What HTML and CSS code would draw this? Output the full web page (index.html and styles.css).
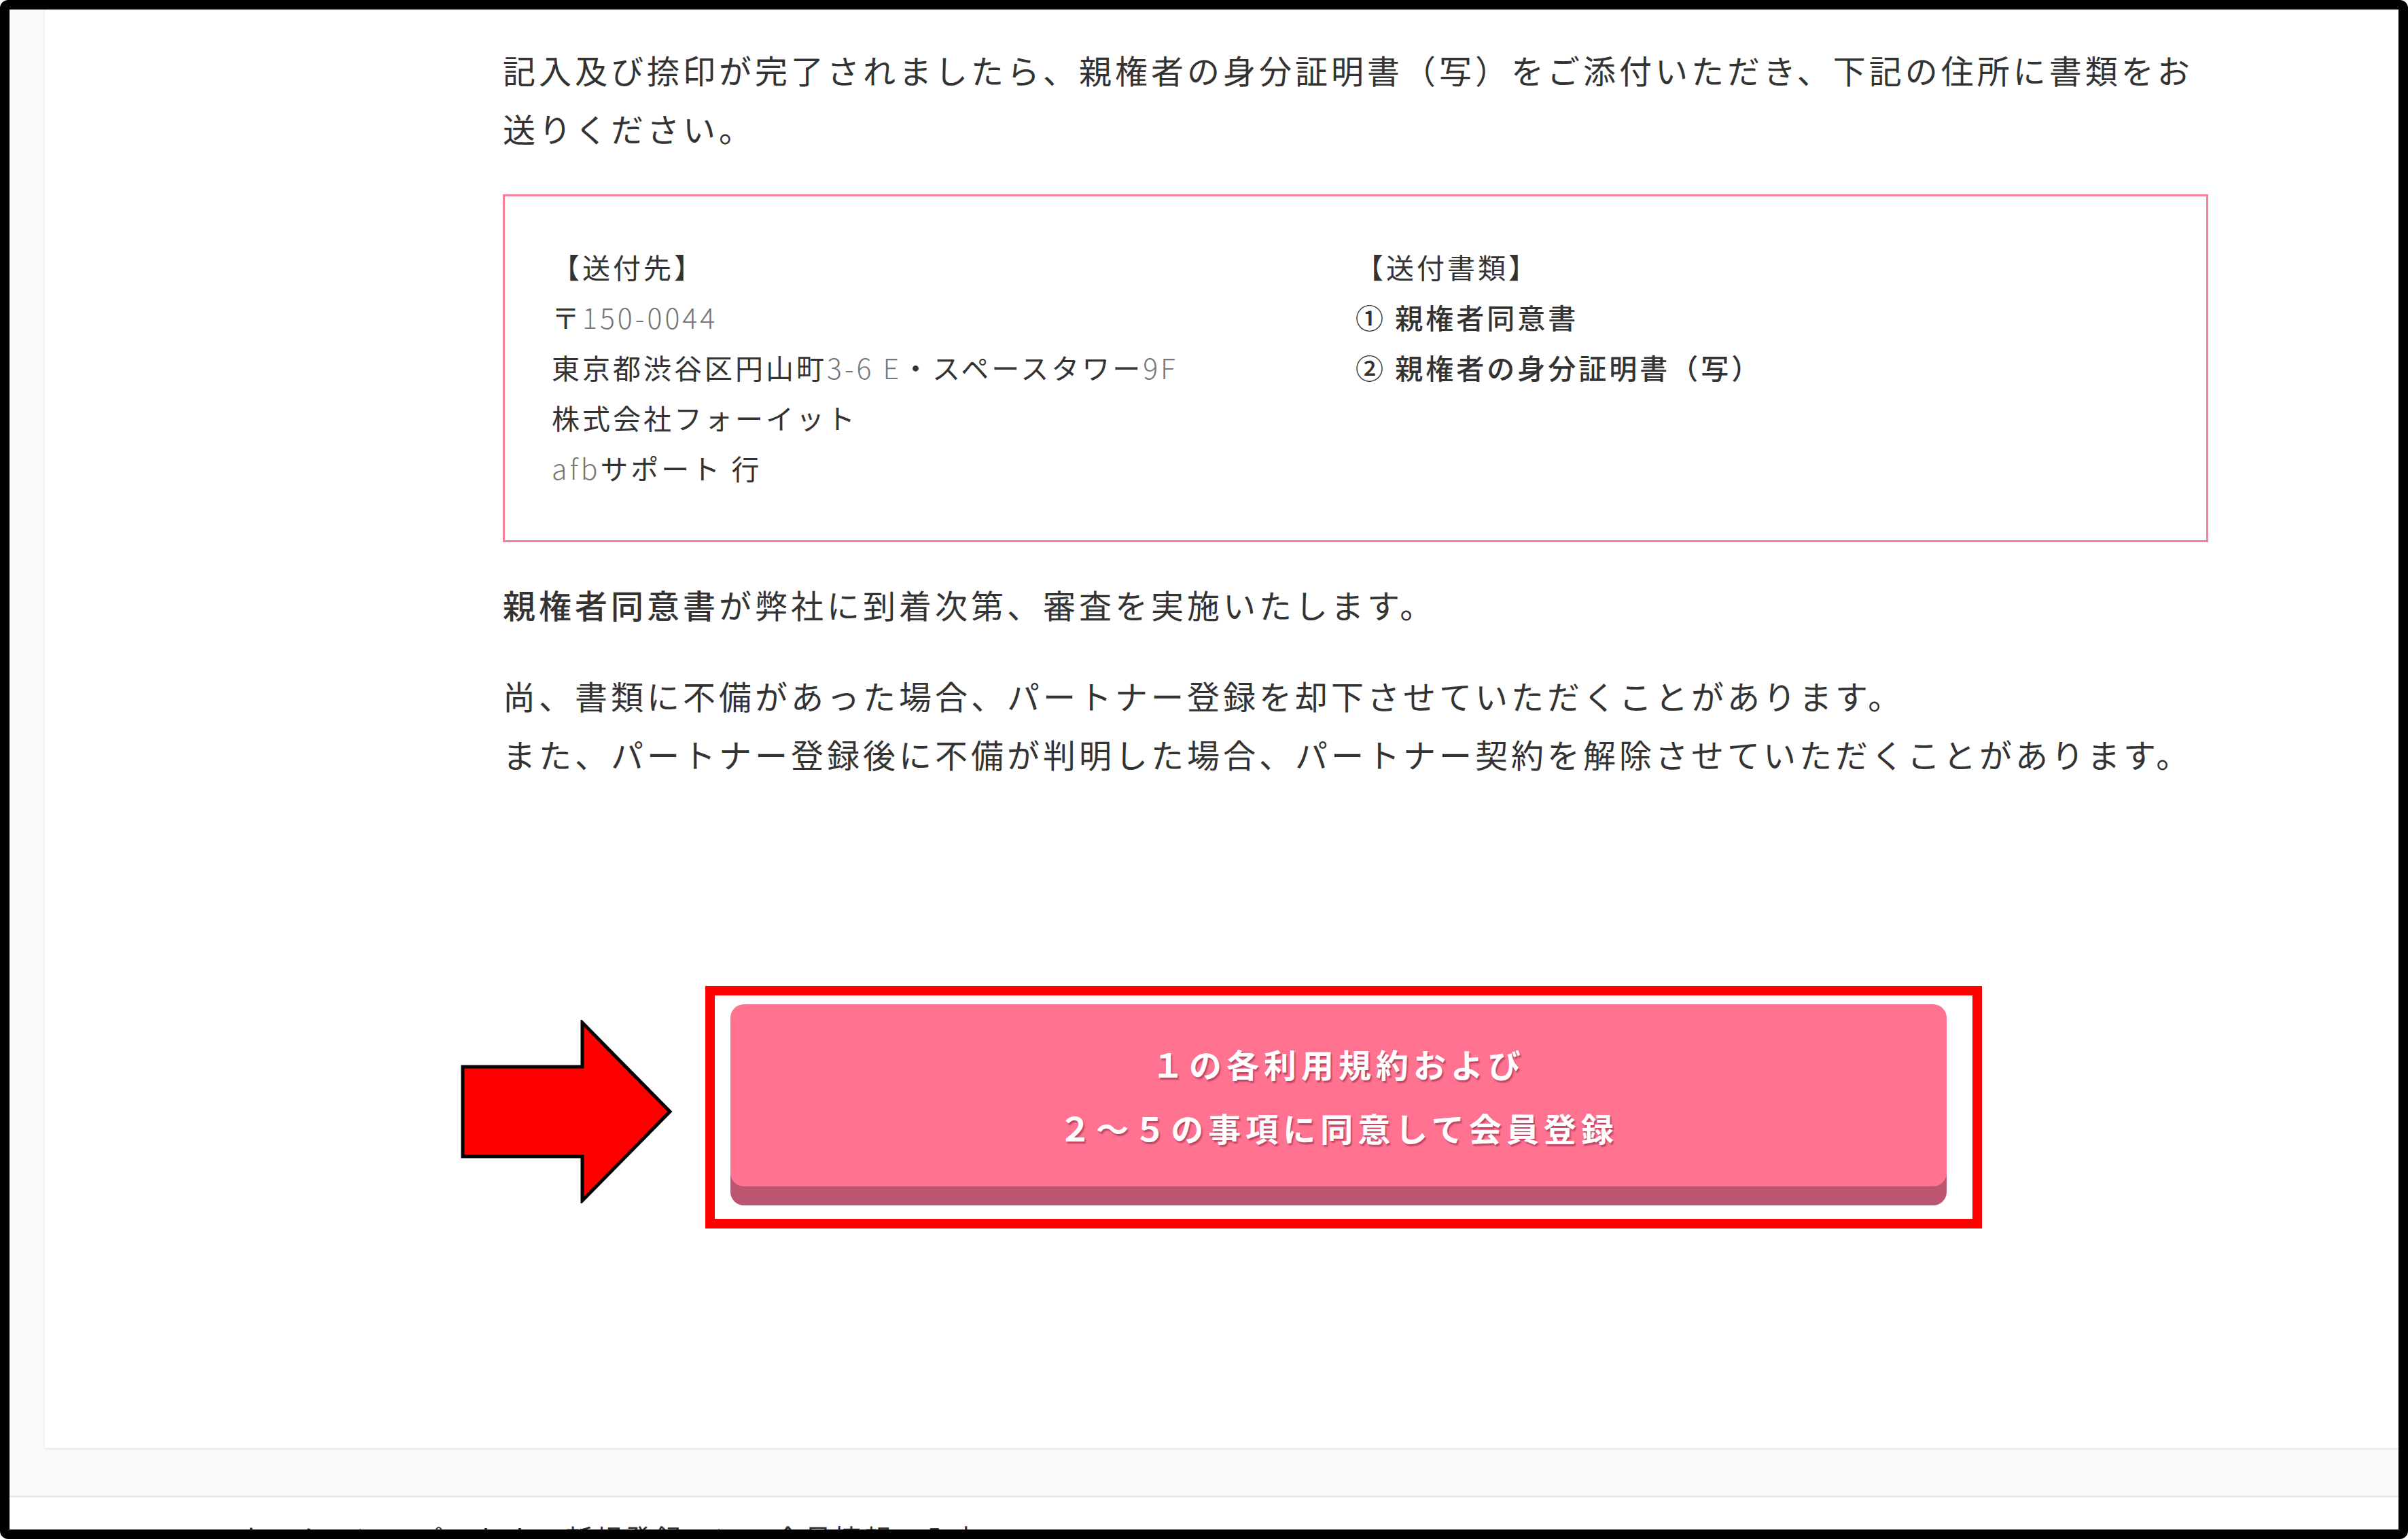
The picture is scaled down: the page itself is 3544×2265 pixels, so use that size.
FILE: index.html
```html
<!DOCTYPE html>
<html lang="ja">
<head>
  <meta charset="UTF-8">
  <title>パートナー登録 - 親権者同意書</title>
  <link rel="stylesheet" href="styles.css">
</head>
<body>
  <div class="frame">
    <main class="main">
      <section class="card">
        <div class="entry">
          <p>記入及び捺印が完了されましたら、親権者の身分証明書（写）をご添付いただき、下記の住所に書類をお送りください。</p>

          <div class="send-box">
            <div class="send-col">
              <div>【送付先】</div>
              <div>〒<span class="alpha">150-0044</span></div>
              <div>東京都渋谷区円山町<span class="alpha">3-6 E</span>・スペースタワー<span class="alpha">9F</span></div>
              <div>株式会社フォーイット</div>
              <div><span class="alpha">afb</span>サポート 行</div>
            </div>
            <div class="send-col">
              <div>【送付書類】</div>
              <div class="doc">① 親権者同意書</div>
              <div class="doc">② 親権者の身分証明書（写）</div>
            </div>
          </div>

          <p><strong>親権者同意書</strong>が弊社に到着次第、審査を実施いたします。</p>
          <p class="last">尚、書類に不備があった場合、パートナー登録を却下させていただくことがあります。<br>また、パートナー登録後に不備が判明した場合、パートナー契約を解除させていただくことがあります。</p>

          <div class="cta">
            <svg class="arrow" width="314" height="270" viewBox="0 0 314 270">
              <polygon points="3,69 179,69 179,4 308,135 179,266 179,201 3,201" fill="#ff0000" stroke="#000" stroke-width="5"/>
            </svg>
            <div class="highlight">
              <button type="submit" class="btn-agree">１の各利用規約および<br>２～５の事項に同意して会員登録</button>
            </div>
          </div>
        </div>
      </section>
    </main>
    <footer class="footer">
      <span>ホーム　＞　パートナー新規登録　＞　会員情報の入力</span>
    </footer>
  </div>
</body>
</html>
```

FILE: styles.css
```css
html, body {
  margin: 0;
  padding: 0;
  overflow: hidden;
  background-color: #fff;
}
body {
  font-family: "Noto Sans CJK JP", "Noto Sans", sans-serif;
  color: #333;
}
.frame {
  width: 3544px;
  height: 2265px;
  box-sizing: border-box;
  border: 14px solid #000;
  border-radius: 12px;
  overflow: hidden;
  background-color: #fff;
}
.main {
  background-color: #fafafa;
  padding: 0 0 70px 51px;
}
.card {
  background-color: #fff;
  border-left: 1px solid #f0f0f0;
  box-shadow: 0 2px 3px rgba(0,0,0,0.08);
  padding: 45px 0 323px 674px;
}
.entry {
  width: 2510px;
}
p {
  margin: 0 0 48px;
  font-size: 48px;
  line-height: 86px;
  letter-spacing: 5px;
}
p.last {
  margin-bottom: 0;
}
p strong {
  font-weight: 500;
}
.send-box {
  display: grid;
  grid-template-columns: 1fr 1fr;
  border: 3px solid #f87d96;
  padding: 66px 69px 70px;
  margin: 55px 0 48px;
  font-size: 41px;
  line-height: 74px;
  letter-spacing: 4px;
}
.send-col .doc {
  font-weight: 500;
}
.alpha {
  color: #777;
  font-weight: 300;
}
.cta {
  display: flex;
  align-items: center;
  gap: 46px;
  margin: 299px 0 0 -62px;
}
.arrow {
  display: block;
  margin-top: 13px;
}
.highlight {
  border: 14px solid #ff0000;
  padding: 13px 38px 20px 23px;
}
.btn-agree {
  display: block;
  width: 1790px;
  height: 268px;
  margin-bottom: 28px;
  border: none;
  border-radius: 20px;
  background-color: #ff7391;
  box-shadow: 0 28px 0 #bd5570;
  color: #fff;
  font-family: "Noto Sans CJK JP", sans-serif;
  font-size: 48px;
  font-weight: 700;
  line-height: 94px;
  letter-spacing: 7px;
  text-shadow: 2px 3px 2px rgba(150,40,70,0.6);
  cursor: pointer;
}
.footer {
  border-top: 3px solid #ececec;
  padding: 30px 0 0 335px;
  font-size: 40px;
  line-height: 58px;
  color: #333;
  letter-spacing: 4px;
}
```
